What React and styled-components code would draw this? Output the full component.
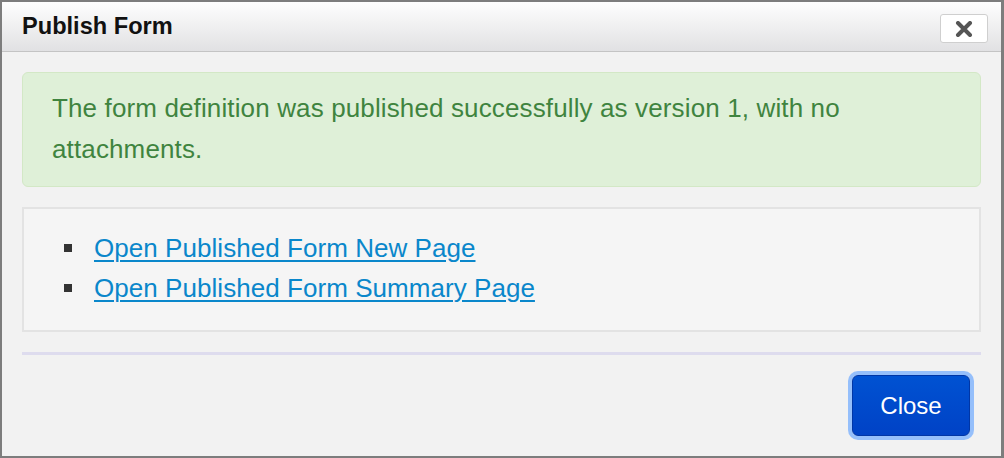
import styled, { createGlobalStyle } from "styled-components";

const GlobalStyle = createGlobalStyle`
  html, body {
    margin: 0;
    padding: 0;
    background: #ffffff;
  }
  body {
    font-family: "Liberation Sans", Arial, Helvetica, sans-serif;
  }
`;

const Dialog = styled.div`
  width: 1004px;
  height: 458px;
  box-sizing: border-box;
  border: 2px solid #7d7d7d;
  border-right-width: 3px;
  background: #f2f2f2;
  display: flex;
  flex-direction: column;
`;

const Header = styled.div`
  height: 49px;
  display: flex;
  align-items: center;
  justify-content: space-between;
  padding: 0 13px 0 20px;
  background: linear-gradient(#fefefe, #e1e1e3);
  border-bottom: 1px solid #c4c4c4;
`;

const Title = styled.h1`
  margin: 0;
  font-size: 23.6px;
  font-weight: 700;
  color: #111;
`;

const CloseX = styled.button`
  width: 48px;
  height: 29px;
  margin-top: 4px;
  padding: 0;
  box-sizing: border-box;
  border: 1px solid #cfcfcf;
  border-radius: 3px;
  background: #ffffff;
  display: flex;
  align-items: center;
  justify-content: center;
`;

const Body = styled.div`
  flex: 1;
  padding: 20px 20px 0;
  display: flex;
  flex-direction: column;
  gap: 20px;
`;

const Alert = styled.div`
  border: 1px solid #d3e8c6;
  border-radius: 6px;
  background: #dff0d8;
  color: #3f843f;
  font-size: 26px;
  letter-spacing: 0.13px;
  line-height: 41px;
  padding: 15px 29px 16px;
`;

const LinkBox = styled.div`
  border: 2px solid #e3e3e3;
  background: #f5f5f5;
  padding: 19px 0 22px;
`;

const LinkList = styled.ul`
  list-style: none;
  margin: 0;
  padding: 0 0 0 40px;
`;

const LinkItem = styled.li`
  display: flex;
  align-items: center;
  height: 40px;
  font-size: 26px;
  letter-spacing: 0.05px;

  &::before {
    content: "";
    width: 8px;
    height: 8px;
    background: #333;
    margin-right: 22px;
    flex-shrink: 0;
  }
`;

const Link = styled.a`
  color: #0a87cb;
  text-decoration: underline;
  text-underline-offset: 3px;
  text-decoration-thickness: 2px;
`;

const Divider = styled.div`
  height: 3px;
  background: #dedcee;
`;

const Footer = styled.div`
  display: flex;
  justify-content: flex-end;
  padding-right: 11px;
`;

const PrimaryButton = styled.button`
  width: 118px;
  height: 61px;
  box-sizing: border-box;
  border: 1px solid #0036a6;
  border-radius: 6px;
  background: linear-gradient(#0052d2, #0042c6);
  box-shadow: 0 0 0 4px rgba(110, 170, 255, 0.7);
  color: #fff;
  font-family: "Liberation Sans", Arial, sans-serif;
  font-size: 24px;
  padding: 0;
`;

export default function App() {
  return (
    <>
      <GlobalStyle />
      <Dialog>
        <Header>
          <Title>Publish Form</Title>
          <CloseX aria-label="close">
            <svg width="18" height="16" viewBox="0 0 18 16">
              <path d="M3 2 L15 14 M15 2 L3 14" stroke="#555" strokeWidth="4" strokeLinecap="round" />
            </svg>
          </CloseX>
        </Header>
        <Body>
          <Alert>
            The form definition was published successfully as version 1, with no attachments.
          </Alert>
          <LinkBox>
            <LinkList>
              <LinkItem>
                <Link href="#">Open Published Form New Page</Link>
              </LinkItem>
              <LinkItem>
                <Link href="#">Open Published Form Summary Page</Link>
              </LinkItem>
            </LinkList>
          </LinkBox>
          <Divider />
          <Footer>
            <PrimaryButton>Close</PrimaryButton>
          </Footer>
        </Body>
      </Dialog>
    </>
  );
}
